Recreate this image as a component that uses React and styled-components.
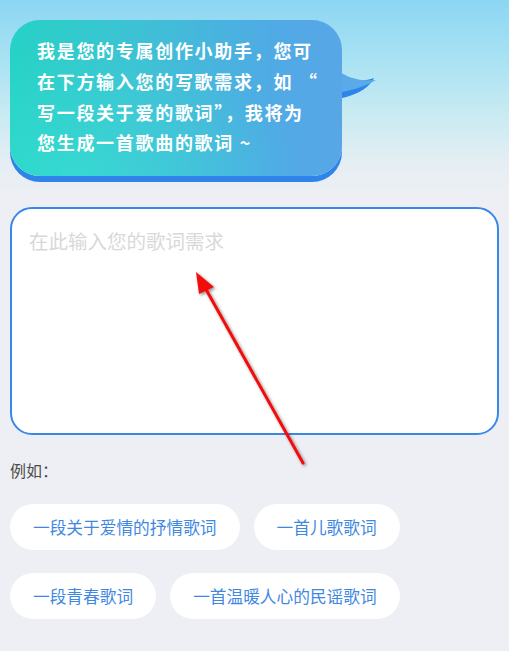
import React from 'react';
import styled, { createGlobalStyle } from 'styled-components';

const GlobalStyle = createGlobalStyle`
  html, body {
    margin: 0;
    padding: 0;
    background: #edeff4;
  }
  body {
    font-family: "Noto Sans CJK SC", "Noto Sans", sans-serif;
  }
`;

const Page = styled.div`
  position: relative;
  width: 509px;
  height: 651px;
  overflow: hidden;
  box-sizing: border-box;
  padding: 20px 10px 0 10px;
  background: linear-gradient(180deg, #8bd6f3 0px, #a9e2f3 60px, #c6eaf2 110px, #e6eef3 165px, #edeff4 195px, #edeff4 100%);
`;

const BubbleWrap = styled.div`
  position: relative;
  width: 332px;
`;

const Bubble = styled.div`
  position: relative;
  z-index: 1;
  box-sizing: border-box;
  height: 156px;
  padding: 15px 10px 0 27px;
  border-radius: 30px;
  background:
    radial-gradient(ellipse at 20% 100%, rgba(60, 230, 215, 0.5), rgba(60, 230, 215, 0) 60%),
    linear-gradient(90deg, #26d2c5 0%, #3cc3d3 35%, #50aae5 80%, #58a6e6 100%);
  box-shadow: 0 6px 0 #2e84ea;
  color: #fff;
  font-weight: 700;
  font-size: 18px;
  letter-spacing: 1.7px;
  line-height: 30.8px;
  white-space: pre;
`;

const Line = styled.div``;

const Tail = styled.svg`
  position: absolute;
  left: 318px;
  top: 34px;
  z-index: 0;
`;

const InputBox = styled.div`
  margin-top: 31px;
  box-sizing: border-box;
  height: 228px;
  border: 2.5px solid #3987e9;
  border-radius: 22px;
  background: #fff;
  padding: 20px 17px;
`;

const Placeholder = styled.div`
  color: #d8d8da;
  font-size: 19.5px;
  line-height: 24px;
`;

const Label = styled.div`
  margin-top: 24px;
  color: #4d4d4d;
  font-size: 16px;
  line-height: 22px;
`;

const Chips = styled.div`
  margin-top: 23px;
  display: flex;
  flex-wrap: wrap;
  column-gap: 14px;
  row-gap: 23px;
  width: 400px;
`;

const Chip = styled.div`
  height: 46px;
  box-sizing: border-box;
  padding: 0 23px;
  border-radius: 23px;
  background: #fff;
  color: #3f88e2;
  font-size: 16.7px;
  display: flex;
  align-items: center;
`;

const Arrow = styled.svg`
  position: absolute;
  left: 0;
  top: 0;
  pointer-events: none;
  overflow: visible;
`;

const examples = [
  '一段关于爱情的抒情歌词',
  '一首儿歌歌词',
  '一段青春歌词',
  '一首温暖人心的民谣歌词',
];

export default function App() {
  return (
    <>
      <GlobalStyle />
      <Page>
        <BubbleWrap>
          <Tail width="52" height="52" viewBox="0 0 52 52">
            <path d="M0 10 C10 26 28 30 46 24 C40 36 24 44 0 46 Z" fill="#2e84ea" />
            <path d="M0 4 C10 22 28 28 48 26 C38 32 22 38 0 40 Z" fill="#5aa9e8" />
          </Tail>
          <Bubble>
            <Line>我是您的专属创作小助手，您可</Line>
            <Line>在下方输入您的写歌需求，如 “</Line>
            <Line>写一段关于爱的歌词”，我将为</Line>
            <Line>您生成一首歌曲的歌词 ~</Line>
          </Bubble>
        </BubbleWrap>
        <InputBox>
          <Placeholder>在此输入您的歌词需求</Placeholder>
        </InputBox>
        <Label>例如：</Label>
        <Chips>
          {examples.map((t) => (
            <Chip key={t}>{t}</Chip>
          ))}
        </Chips>
        <Arrow width="509" height="651" viewBox="0 0 509 651">
          <defs>
            <filter id="sh" x="-20%" y="-20%" width="140%" height="140%">
              <feDropShadow dx="1.5" dy="1.5" stdDeviation="1.5" floodColor="#000" floodOpacity="0.45" />
            </filter>
          </defs>
          <g filter="url(#sh)">
            <line x1="303" y1="463" x2="203" y2="284" stroke="#f20d0d" strokeWidth="3" strokeLinecap="round" />
            <polygon points="196,272 214,287 199,294" fill="#f20d0d" />
          </g>
        </Arrow>
      </Page>
    </>
  );
}
